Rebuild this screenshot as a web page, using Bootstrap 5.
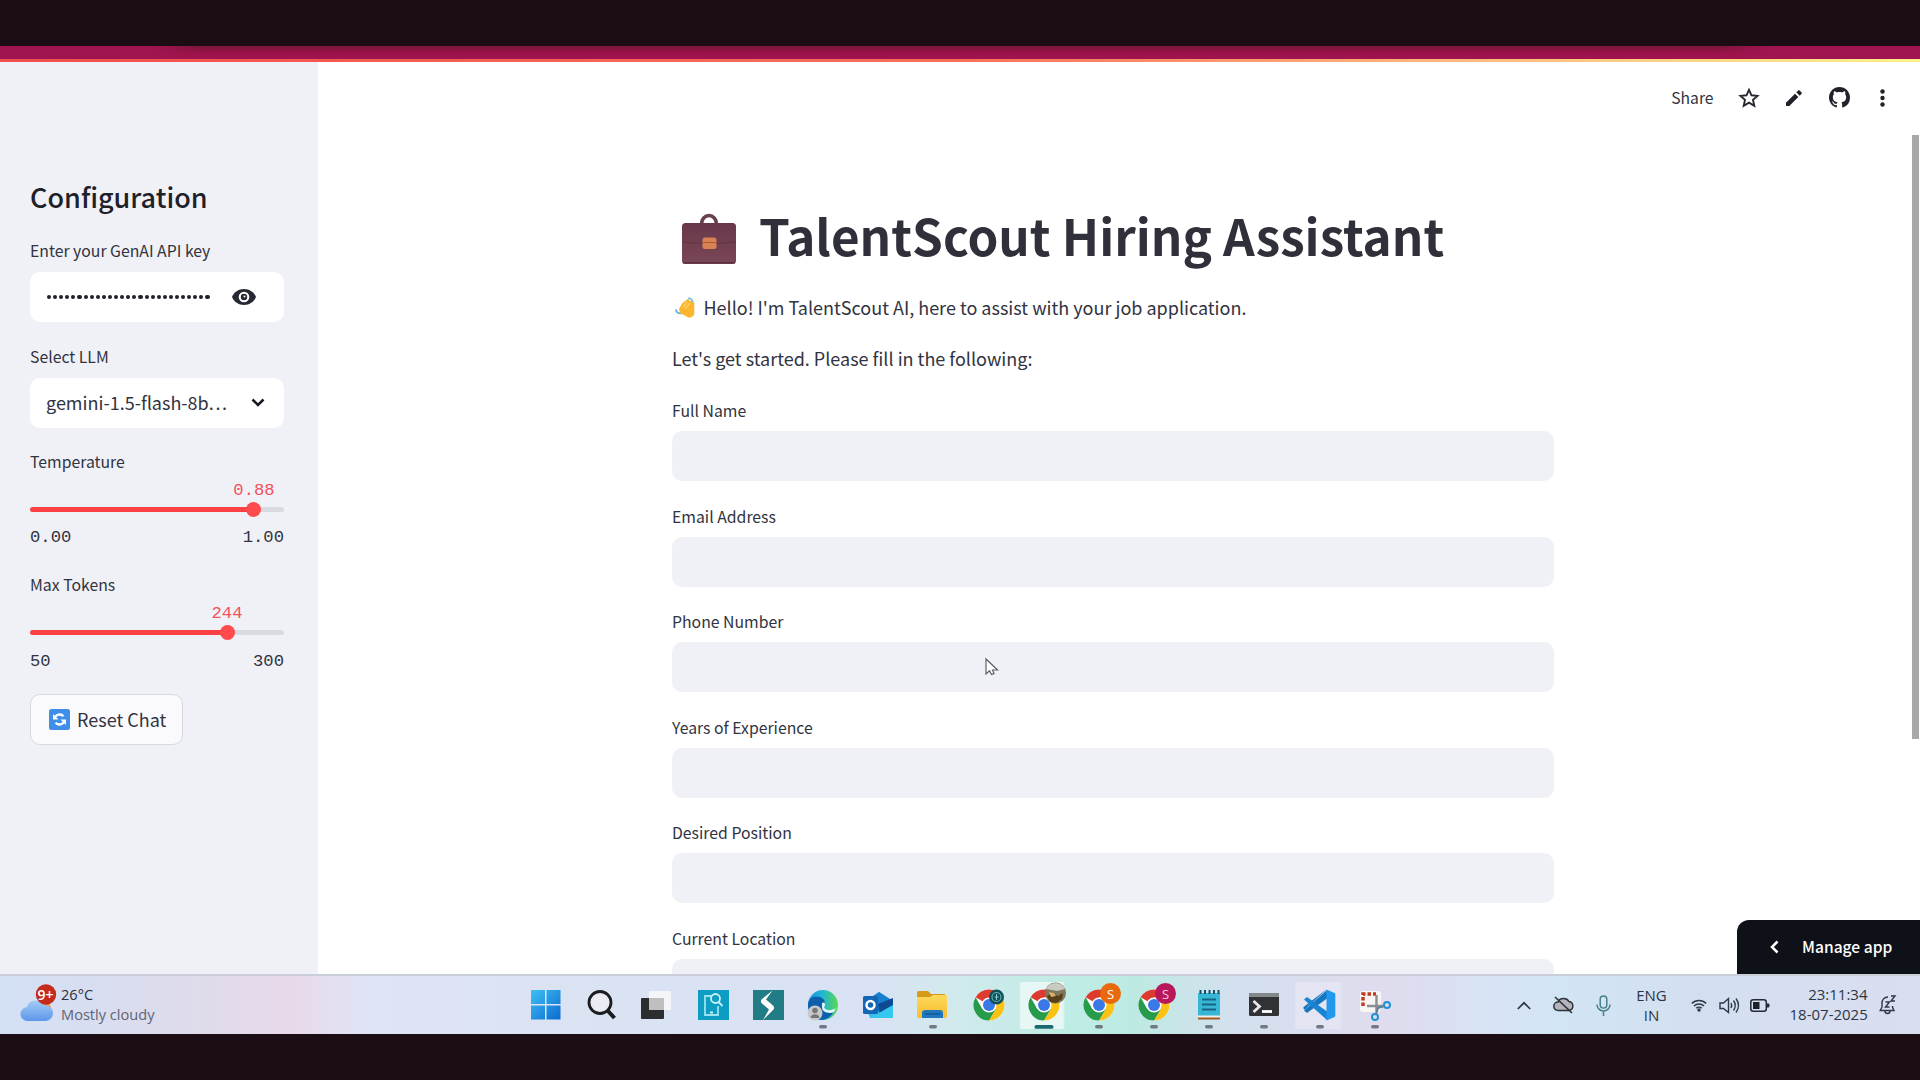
<!DOCTYPE html>
<html lang="en">
<head>
<meta charset="utf-8">
<title>TalentScout Hiring Assistant</title>
<link href="https://cdn.jsdelivr.net/npm/bootstrap@5.3.0/dist/css/bootstrap.min.css" rel="stylesheet">
<style>
html,body{height:100%}
body{background:#1c0c14;font-family:"Noto Sans CJK SC","Noto Sans",sans-serif;color:#31333f;overflow:hidden;font-size:18px}
.screen{width:1920px;height:1080px;padding:46px 0}
.tabstrip{height:13px;background:linear-gradient(90deg,#a0144f 155px,transparent 200px,transparent 1720px,#a0144f 1770px),linear-gradient(#7c163c,#9c124a 60%,#a0144f)}
.rainbow{height:3px;background:linear-gradient(90deg,#f0504e,#f8705a 50%,#ffb87c 75%,#fff08a)}
.appview{height:912px;background:#fff}
.side{width:318px;background:#f0f1f6;padding:108px 34px 0 30px}
.side-title{font-size:27px;line-height:54px;font-weight:500;margin:0 0 15px;color:#1f2129}
.lbl{font-size:15.800px;line-height:24px;height:24px;white-space:nowrap}
.sidebox{height:50px;background:#fff;border-radius:10px;padding:0 16px;margin-top:9px}
.dots{gap:2px;padding-left:1px}
.dots i{width:4.1px;height:4.1px;border-radius:50%;background:#20212b}
.mono{font-family:"Liberation Mono",monospace;font-size:17.2px;line-height:24px}
.sval{color:#f2525d;width:80px;margin-left:-40px;height:23px;line-height:33px}
.trackwrap{padding:10px 0 14.500px}
.track{height:5px;border-radius:3px;background:#d9dbe0}
.track>div{height:5px;border-radius:3px;background:#fc4145}
.knob{width:15px;height:15px;border-radius:50%;background:#ff4b4b;flex:none;margin-right:-7.5px}
.resetbtn{width:153px;height:51px;border:1.5px solid #d8d9df;border-radius:10px;background:#fafafd;padding:0 0 0 18px;gap:7px;color:#31333f;margin-top:20.500px}
.main-title{font-size:49.400px;font-weight:700;line-height:64px;margin:-4px 0 0;color:#2f3039;white-space:nowrap}
.formcol{width:882px;margin-left:354px;padding-top:143px}
.fieldlist{margin-top:26px}
.fieldlist .lbl{margin-bottom:7px;line-height:21px}
.field{height:50px;border-radius:10px;background:#f0f1f6;margin-bottom:24.500px}
.toolbar{height:71px;top:0;right:0;padding-right:30px}
.scroller{width:7px;height:604px;right:1px;top:73px;background:#a8a8a8}
.manage{width:183px;height:54px;right:0;bottom:0;background:#0e1117;border-radius:12px 0 0 0;color:#fff;font-size:15.600px;font-weight:500}
.taskbar{height:60px;border-top:2px solid #c9ced8;font-family:"Open Sans","Noto Sans",sans-serif;font-size:15px;line-height:20px;
background:linear-gradient(90deg,#d3e0f6 0,#dcdcec 170px,#e8d9ea 290px,#dfe4f7 370px,#dae3f2 600px,#d9e2f4 870px,#d0eaec 960px,#bfece4 1060px,#bdeae2 1130px,#d3e0ee 1230px,#dfdcee 1380px,#d8e2f3 1480px,#d2e5f5 1560px,#d3dff0 1700px,#d9def0 1920px)}
.dockicon{width:55.2px;height:58px}
.dockicon.active{background:linear-gradient(90deg,transparent 5px,#e6f7f5 7px,#e6f7f5 49px,transparent 51px) 0 6px/100% 47px no-repeat}
.dockicon.recent{background:linear-gradient(90deg,transparent 4px,#e4e4f2 6px,#e4e4f2 50px,transparent 52px) 0 6px/100% 47px no-repeat}
.cursor-arrow{left:984px;top:657px}
svg{display:block;flex:none;overflow:visible}
</style>
</head>
<body>
<svg width="0" height="0" class="position-absolute">
<defs>
<linearGradient id="win" x1="0" y1="0" x2="1" y2="1"><stop offset="0" stop-color="#3fc0f5"/><stop offset="1" stop-color="#0a6bd0"/></linearGradient>
<linearGradient id="cloudg" x1="0" y1="0" x2="0" y2="1"><stop offset="0" stop-color="#a5cbf8"/><stop offset="1" stop-color="#5d97e8"/></linearGradient>
<linearGradient id="edgeg" x1="0" y1="0" x2="1" y2="0"><stop offset="0" stop-color="#1a8fe0"/><stop offset=".5" stop-color="#22b8cf"/><stop offset="1" stop-color="#5bd84f"/></linearGradient>
<linearGradient id="foldg" x1="0" y1="0" x2="0" y2="1"><stop offset="0" stop-color="#ffd95c"/><stop offset="1" stop-color="#f7bd2e"/></linearGradient>
<linearGradient id="caseg" x1="0" y1="0" x2="0" y2="1"><stop offset="0" stop-color="#69384a"/><stop offset="1" stop-color="#7a4657"/></linearGradient>
<g id="chrome">
<circle cx="15.5" cy="15.5" r="15.5" fill="#fff"/>
<path d="M15.5 15.5L2.1 7.7A15.5 15.5 0 0 1 28.9 7.75H15.5z" fill="#de3b30"/>
<path d="M15.5 7.75H28.9A15.5 15.5 0 0 1 15.5 31L22.2 19.4z" fill="#fbc216"/>
<path d="M2.1 7.7A15.5 15.5 0 0 0 15.5 31L22.2 19.4 15.5 22 8.8 19.4z" fill="#259b4b"/>
<circle cx="15.5" cy="15.5" r="7.6" fill="#fff"/><circle cx="15.5" cy="15.5" r="6" fill="#3b78e7"/>
</g>
<rect id="pill" width="8" height="3.5" rx="1.75" fill="#717984"/>
</defs>
</svg>
<div class="screen d-flex flex-column position-relative">
<div class="tabstrip"></div>
<div class="rainbow"></div>
<div class="appview d-flex position-relative overflow-hidden">
  <aside class="side flex-shrink-0">
    <h2 class="side-title">Configuration</h2>
    <div class="lbl">Enter your GenAI API key</div>
    <div class="sidebox d-flex align-items-center">
      <div class="dots d-flex" id="dots"></div>
      <svg class="ms-auto" style="margin-right:12px" width="24" height="16" viewBox="0 0 24 16"><path d="M12 0C6.500 0 2 3.200 0 8c2 4.800 6.500 8 12 8s10-3.200 12-8C22 3.200 17.500 0 12 0z" fill="#262833"/><circle cx="12" cy="8" r="5.300" fill="#fff"/><circle cx="12" cy="8" r="3.200" fill="#262833"/><circle cx="12.500" cy="7.500" r="1" fill="#fff"/></svg>
    </div>
    <div class="lbl" style="margin-top:22.500px">Select LLM</div>
    <div class="sidebox d-flex align-items-center justify-content-between">
      <span>gemini-1.5-flash-8b<span style="letter-spacing:1.700px">...</span></span>
      <svg width="14" height="9" viewBox="0 0 14 9" style="margin-right:3px"><path d="M1.500 1.500L7 7l5.500-5.500" fill="none" stroke="#16171f" stroke-width="2.500"/></svg>
    </div>
    <div class="lbl" style="margin-top:22px">Temperature</div>
    <div class="mono sval text-center" style="transform:translateX(224px)">0.88</div>
    <div class="trackwrap"><div class="track d-flex align-items-center"><div class="d-flex align-items-center justify-content-end" style="width:88%"><span class="knob"></span></div></div></div>
    <div class="mono d-flex justify-content-between"><span>0.00</span><span>1.00</span></div>
    <div class="lbl" style="margin-top:23px">Max Tokens</div>
    <div class="mono sval text-center" style="transform:translateX(197px)">244</div>
    <div class="trackwrap"><div class="track d-flex align-items-center"><div class="d-flex align-items-center justify-content-end" style="width:77.6%"><span class="knob"></span></div></div></div>
    <div class="mono d-flex justify-content-between"><span>50</span><span>300</span></div>
    <button class="resetbtn d-flex align-items-center text-nowrap">
      <svg width="21" height="21" viewBox="0 0 21 21"><rect width="21" height="21" rx="2.500" fill="#3f8ee8"/><path d="M5.500 9.500a5.300 5.300 0 0 1 9-2.300M15.500 11.500a5.300 5.300 0 0 1-9 2.300" fill="none" stroke="#fff" stroke-width="2.300"/><path d="M4 5v5.500h5.500zM17 16v-5.500h-5.500z" fill="#fff"/></svg>
      <span>Reset Chat</span></button>
  </aside>
  <main class="flex-grow-1">
    <div class="formcol">
      <div class="d-flex align-items-center" style="height:64px">
        <svg width="54" height="50" viewBox="0 0 54 50" style="margin:4px 23px 0 10px"><path d="M19.500 10a7.500 8.500 0 0 1 15 0" fill="none" stroke="#66404c" stroke-width="3.500"/><rect x="0" y="9" width="54" height="41" rx="3.500" fill="url(#caseg)"/><path d="M0 28c18 2 36 2 54 0" fill="none" stroke="#633345" stroke-width="1"/><path d="M1 48.700h52" stroke="#5d3040" stroke-width="1.500"/><rect x="20.500" y="23.500" width="14" height="11.500" rx="2.500" fill="#d98253"/><path d="M20.500 28.500h14" stroke="#a85a3e" stroke-width="1"/></svg>
        <h1 class="main-title">TalentScout Hiring Assistant</h1>
      </div>
      <div class="d-flex align-items-center text-nowrap" style="height:30px;margin-top:23px">
        <svg width="20" height="21" viewBox="0 0 20 21" style="margin:0 8.500px 0 3px"><path d="M1 12.500c0 3 3 4.500 5.500 3.500" fill="none" stroke="#6cb4dd" stroke-width="2"/><path d="M4 12l3-5.500 5-4c1-.7 2 0 2 1l4 1c1 0 1.300 1 1.300 2V16c0 3-3 5-6 4.500L5 16z" fill="#fbb62d"/><path d="M8 10l4-5M10 12l5-6" stroke="#ffd163" stroke-width="1.500"/><path d="M13 1.500c3-.5 4.500 1 4.500 4" fill="none" stroke="#8dc4dc" stroke-width="2"/></svg>
        <span>Hello! I'm TalentScout AI, here to assist with your job application.</span>
      </div>
      <div class="text-nowrap" style="height:30px;line-height:28px;margin-top:22px">Let's get started. Please fill in the following:</div>
      <div class="fieldlist">
        <div class="lbl">Full Name</div><div class="field"></div>
        <div class="lbl">Email Address</div><div class="field"></div>
        <div class="lbl">Phone Number</div><div class="field"></div>
        <div class="lbl">Years of Experience</div><div class="field"></div>
        <div class="lbl">Desired Position</div><div class="field"></div>
        <div class="lbl">Current Location</div><div class="field"></div>
      </div>
    </div>
  </main>
  <div class="toolbar position-absolute d-flex align-items-center">
    <span style="font-size:15.700px;margin-right:25.500px">Share</span>
    <svg width="20" height="19" viewBox="0 0 20 19" style="margin-right:27px"><path d="M10 1.800l2.500 5.500 6 .6-4.500 4 1.300 5.900L10 14.700l-5.300 3.100L6 11.900l-4.500-4 6-.6z" fill="none" stroke="#262730" stroke-width="1.900"/></svg>
    <svg width="16" height="16" viewBox="0 0 16 16" style="margin-right:27px"><path d="M0 12.700V16h3.300l9-9L9 3.700zM15.600 3.700a1 1 0 0 0 0-1.300L13.600.4a1 1 0 0 0-1.300 0L10.300 2.300l3.400 3.400z" fill="#1f2028"/></svg>
    <svg width="21" height="21" viewBox="0 0 16 16" style="margin-right:30px"><path fill="#20222a" d="M8 0C3.580 0 0 3.580 0 8c0 3.540 2.290 6.530 5.470 7.590.4.070.55-.17.55-.38 0-.19-.01-.82-.01-1.490-2.010.37-2.530-.49-2.690-.94-.09-.23-.48-.94-.82-1.130-.28-.15-.68-.52-.01-.53.63-.01 1.080.58 1.230.82.72 1.210 1.870.87 2.330.66.070-.52.28-.87.51-1.070-1.780-.2-3.640-.89-3.640-3.950 0-.87.31-1.590.82-2.150-.08-.2-.36-1.020.08-2.120 0 0 .67-.21 2.200.82.64-.18 1.320-.27 2-.27s1.360.09 2 .27c1.530-1.040 2.200-.82 2.200-.82.44 1.100.16 1.920.08 2.120.51.56.82 1.270.82 2.150 0 3.070-1.870 3.750-3.650 3.950.29.25.54.73.54 1.480 0 1.070-.01 1.930-.01 2.200 0 .21.15.46.55.38A8.010 8.010 0 0 0 16 8c0-4.420-3.580-8-8-8z"/></svg>
    <svg width="5" height="18" viewBox="0 0 5 18" style="margin-right:5px"><g fill="#20222a"><circle cx="2.500" cy="2.500" r="2.200"/><circle cx="2.500" cy="9" r="2.200"/><circle cx="2.500" cy="15.500" r="2.200"/></g></svg>
  </div>
  <div class="scroller position-absolute"></div>
  <div class="manage position-absolute d-flex align-items-center text-nowrap">
    <svg width="9" height="14" viewBox="0 0 9 14" style="margin:0 23px 0 33px"><path d="M7.500 1.500L2 7l5.500 5.500" fill="none" stroke="#fff" stroke-width="2.500"/></svg>
    <span>Manage app</span>
  </div>
</div>
<footer class="taskbar d-flex align-items-center">
  <div class="d-flex align-items-center" style="width:517px;padding-left:21px">
    <svg width="35" height="37" viewBox="0 0 35 37" style="margin:-6px 5px 0 0"><circle cx="25" cy="24" r="5" fill="#f59331"/><path d="M7 37a7 7 0 0 1-1-14 9 8 0 0 1 17-2 8 8 0 0 1 2 16z" fill="url(#cloudg)"/><circle cx="25" cy="10.500" r="10.200" fill="#c42b1c"/><text x="24.500" y="15.500" text-anchor="middle" font-size="14" font-weight="600" fill="#fff">9+</text></svg>
    <div class="text-nowrap" style="font-size:14.600px;margin-top:-2px"><div style="color:#2b3140">26°C</div><div style="color:#5e6475">Mostly cloudy</div></div>
  </div>
  <div class="d-flex">
    <div class="dockicon"><svg width="55" height="58" viewBox="0 0 55 58"><path d="M14 14h14v14H14zM29.500 14h14v14h-14zM14 29.500h14v14H14zM29.500 29.500h14v14h-14z" fill="url(#win)"/></svg></div>
    <div class="dockicon"><svg width="55" height="58"><circle cx="28" cy="26.500" r="11" fill="#e9ecf3" stroke="#1b1c20" stroke-width="2.800"/><path d="M36 35l6.500 7" stroke="#1b1c20" stroke-width="4"/></svg></div>
    <div class="dockicon"><svg width="55" height="58"><rect x="14" y="22" width="23" height="21" rx="1" fill="#2b2d2e"/><rect x="22" y="15" width="22" height="19" rx="1" fill="#fafafa" opacity=".82"/><rect x="22" y="22" width="15" height="12" fill="#bfbfbf"/></svg></div>
    <div class="dockicon"><svg width="55" height="58"><rect x="15" y="14" width="31" height="30" fill="#0d9dc2"/><path d="M29 20h-7v19h13v-9" fill="none" stroke="#9be2f1" stroke-width="1.800"/><circle cx="32.500" cy="22.500" r="4.500" fill="none" stroke="#c9f1f9" stroke-width="1.800"/><path d="M35.500 26l4 4M27 36.500h3" stroke="#c9f1f9" stroke-width="1.800"/></svg></div>
    <div class="dockicon"><svg width="55" height="58"><rect x="15" y="14" width="31" height="30" fill="#217c85"/><path d="M34.500 14.500L23.500 23.500q-1.500 2 .5 4l7 6L25 44l10.500-10.500q1.500-2-.5-4l-7-6z" fill="#fff"/></svg></div>
    <div class="dockicon"><svg width="55" height="58"><circle cx="30" cy="29" r="15" fill="url(#edgeg)"/><path d="M15 29c0-7 6-10 12-8 5 2 6 6 3 9-2 4 3 7 11 5-3 6-8 9-13 9-8-1-13-7-13-15z" fill="#0d5fae"/><path d="M29 27c3-2 4 2 2 4 1 4 8 4 12 1l-2 4c-4 2-12 1-12-5z" fill="#e1f5fb"/><circle cx="22" cy="37" r="7.500" fill="#c9c9c9"/><circle cx="22" cy="34.500" r="2.800" fill="#777"/><path d="M17.500 42c0-5 9-5 9 0z" fill="#777"/><use href="#pill" x="26" y="49"/></svg></div>
    <div class="dockicon"><svg width="55" height="58"><path d="M16 27l15-11 14 9v17H22z" fill="#39bdec"/><path d="M16 26l15-10 14 9-14 11z" fill="#1b7fd0"/><path d="M30 28l15-6v9L32 40z" fill="#0e4a94"/><path d="M22 42l23-13v13z" fill="#35c8ef"/><rect x="15" y="20" width="15" height="18" rx="1.500" fill="#1465b4"/><circle cx="22.500" cy="29" r="4" fill="none" stroke="#fff" stroke-width="2.500"/></svg></div>
    <div class="dockicon"><svg width="55" height="58"><path d="M14 17q0-2 2-2h9l3 3h14v12H14z" fill="#d69b16"/><path d="M14 21h13l3-2h14v21q0 2-2 2H16q-2 0-2-2z" fill="url(#foldg)"/><path d="M19 42v-5q0-3 3-3h15q3 0 3 3v5z" fill="#1f78bd"/><path d="M22 38h15" stroke="#175a98" stroke-width="1.500"/><use href="#pill" x="26" y="49"/></svg></div>
    <div class="dockicon"><svg width="55" height="58"><use href="#chrome" x="14.500" y="13.500"/><circle cx="37.500" cy="21" r="7.500" fill="#104f59"/><circle cx="37.500" cy="21" r="4.500" fill="none" stroke="#5bb1b1" stroke-width="1.200"/><path d="M37.500 18v6M35.500 21h4" stroke="#8fd0d0"/></svg></div>
    <div class="dockicon active"><svg width="55" height="58"><use href="#chrome" x="14.500" y="13.500"/><circle cx="41.500" cy="17" r="10.500" fill="#82775c"/><path d="M32 13a10.500 10.500 0 0 1 19 0l-8 2z" fill="#c9cbc0"/><path d="M33 20l6-3 5 3 5-3-1 6-6 4-6-1z" fill="#56401d"/><path d="M35 16l5 1 2 3-5 1z" fill="#d8b068"/><rect x="20.500" y="49" width="19" height="3.800" rx="1.900" fill="#176b70"/></svg></div>
    <div class="dockicon"><svg width="55" height="58"><use href="#chrome" x="14.500" y="13.500"/><circle cx="41.500" cy="17.500" r="10.500" fill="#e86a0c"/><text x="41.500" y="22.500" text-anchor="middle" font-size="13" fill="#fff">S</text><use href="#pill" x="26" y="49"/></svg></div>
    <div class="dockicon"><svg width="55" height="58"><use href="#chrome" x="14.500" y="13.500"/><circle cx="41.500" cy="17.500" r="10.500" fill="#b8175c"/><text x="41.500" y="22.500" text-anchor="middle" font-size="13" fill="#f7c9dc">S</text><use href="#pill" x="26" y="49"/></svg></div>
    <div class="dockicon"><svg width="55" height="58"><rect x="19" y="17" width="22" height="23" fill="#38b6d6"/><path d="M19 39.500h22v3.500H19z" fill="#f4eee6"/><path d="M19 42.500h22" stroke="#a25a24" stroke-width="2"/><path d="M21.500 14v4M26 14v4M30.500 14v4M35 14v4M39.500 14v4" stroke="#134e68" stroke-width="2"/><path d="M23 23.500h14M23 28.500h14M23 33.500h14" stroke="#146583" stroke-width="1.800"/><use href="#pill" x="26" y="49"/></svg></div>
    <div class="dockicon"><svg width="55" height="58"><rect x="15" y="17" width="30" height="23" rx="1.500" fill="#303235"/><path d="M15 18.500q0-1.500 1.500-1.500h27q1.500 0 1.500 1.500V21H15z" fill="#85888b"/><path d="M19.500 25l6 5.500-6 5.500" fill="none" stroke="#e8e8e8" stroke-width="2.800"/><path d="M28 35.500h10" stroke="#fff" stroke-width="2.800"/><use href="#pill" x="26" y="49"/></svg></div>
    <div class="dockicon recent"><svg width="55" height="58"><path d="M36.500 13.500L17.800 30.700l-2.300 2.600q-.8.500-1.400-.1l-.6-.7q-.5-.8.100-1.500L36 13.800z" fill="#1577c2"/><path d="M37 14L14 34.500l3 2.500L37 22.500z" fill="#1577c2"/><path d="M37 44L14 23.500l3-2.500 20 14.500z" fill="#1a83d4"/><path d="M36.500 13.500l8 3.500q.8.300.8 1.200v21.600q0 .9-.8 1.200l-8 3.500z" fill="#2299ec"/><use href="#pill" x="26" y="49"/></svg></div>
    <div class="dockicon"><svg width="55" height="58"><rect x="15" y="15" width="21" height="21" rx="3" fill="#f9f5f4"/><path d="M18 30V18h13" fill="none" stroke="#bd3a1e" stroke-width="3.500" stroke-dasharray="3.500 2"/><path d="M31.500 19v17M22 30h16" stroke="#8b9096" stroke-width="2.500"/><circle cx="42" cy="29" r="3" fill="none" stroke="#1f93d2" stroke-width="2"/><circle cx="30" cy="41" r="3" fill="none" stroke="#1f93d2" stroke-width="2"/><path d="M31 38l2-6 6-2" fill="none" stroke="#5d7f9c" stroke-width="2"/><use href="#pill" x="26" y="49"/></svg></div>
  </div>
  <div class="d-flex align-items-center text-nowrap" style="margin-left:116.500px;color:#2c3544">
    <svg width="14" height="9" viewBox="0 0 14 9"><path d="M.8 8L7 1.800 13.200 8" fill="none" stroke="#2c3544" stroke-width="1.700"/></svg>
    <svg width="21" height="18" viewBox="0 0 21 18" style="margin-left:22px"><path d="M5 14.500a4.200 4.200 0 0 1 0-8.400 6 5.500 0 0 1 11-.5 4.500 4.500 0 0 1 0 8.900z" fill="#b4b5bb" stroke="#2e333c" stroke-width="1.500"/><path d="M2 1l17 16" stroke="#2e333c" stroke-width="1.700"/></svg>
    <svg width="15" height="21" viewBox="0 0 15 21" style="margin-left:22px"><rect x="4.200" y="1" width="6.600" height="12" rx="3.300" fill="none" stroke="#47808a" stroke-width="1.500"/><path d="M1 9.500a6.500 6.500 0 0 0 13 0M7.500 16v5" fill="none" stroke="#47808a" stroke-width="1.500"/></svg>
    <div class="text-center" style="width:34px;margin-left:24px;margin-top:-1px"><div>ENG</div><div>IN</div></div>
    <svg width="16" height="14" viewBox="0 0 16 14" style="margin-left:22px"><path d="M.8 5.500a10.200 10.200 0 0 1 14.400 0M3 8a7 7 0 0 1 10 0M5.200 10.300a4 4 0 0 1 5.600 0" fill="none" stroke="#2f3846" stroke-width="1.500"/><circle cx="8" cy="12" r="1.700" fill="#2f3846"/></svg>
    <svg width="21" height="17" viewBox="0 0 21 17" style="margin-left:12px"><path d="M1 6h3.500L9.500 1.500v14L4.500 11.500H1z" fill="none" stroke="#2f3846" stroke-width="1.400"/><path d="M12 6q1.500 2.500 0 5M14.500 3.500q3.500 5 0 10M17 1.500q5 7 0 14" fill="none" stroke="#2f3846" stroke-width="1.400"/></svg>
    <svg width="20" height="13" viewBox="0 0 20 13" style="margin-left:10px"><rect x=".8" y=".8" width="15.500" height="11.400" rx="2.500" fill="none" stroke="#222a36" stroke-width="1.500"/><rect x="3" y="3" width="6.500" height="7" fill="#1c2028"/><path d="M17 4.500h1.500q1 0 1 2t-1 2H17z" fill="#222a36"/></svg>
    <div class="text-end" style="width:78px;margin-left:20px;margin-top:-3px"><div>23:11:34</div><div>18-07-2025</div></div>
    <svg width="18" height="20" viewBox="0 0 18 20" style="margin-left:11px"><path d="M9 2C5 2 3 5 3 8v4L1.200 15.500H15L13.500 12v-1M6 16a2.500 2.500 0 0 0 5 0" fill="none" stroke="#2f3846" stroke-width="1.400"/><path d="M6.500 7h4l-4 5h4M12 1h4l-4 5h4" fill="none" stroke="#2f3846" stroke-width="1.400"/></svg>
  </div>
</footer>
<svg class="cursor-arrow position-absolute" width="14" height="20" viewBox="0 0 14 20"><path d="M2 2v15l3.500-3.200 2 3.800 2.500-1-1.500-3.600h5z" fill="#fff" stroke="#5d5f68" stroke-width="1.200"/></svg>
</div>
<script src="https://cdn.jsdelivr.net/npm/bootstrap@5.3.0/dist/js/bootstrap.bundle.min.js"></script>
<script>
document.getElementById('dots').innerHTML='<i></i>'.repeat(27);
</script>
</body>
</html>
